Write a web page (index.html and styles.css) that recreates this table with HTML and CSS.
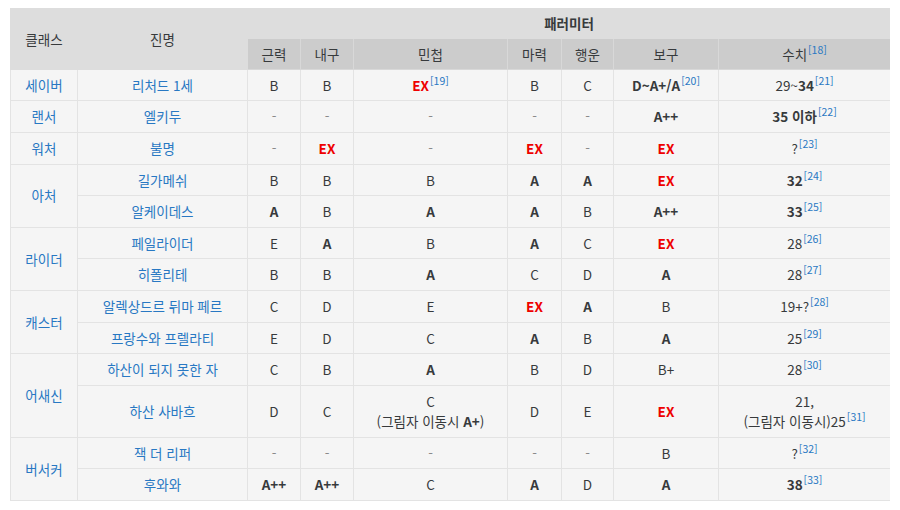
FILE: index.html
```html
<!DOCTYPE html>
<html lang="ko">
<head>
<meta charset="utf-8">
<link rel="stylesheet" href="styles.css">
</head>
<body>
<table class="params">
  <colgroup>
    <col class="c-class"><col class="c-name"><col class="c-str"><col class="c-end"><col class="c-agi"><col class="c-mag"><col class="c-luck"><col class="c-np"><col class="c-val">
  </colgroup>
  <thead>
    <tr class="h1">
      <th rowspan="2">클래스</th>
      <th rowspan="2">진명</th>
      <th colspan="7" class="strong">패러미터</th>
    </tr>
    <tr class="h2">
      <th>근력</th><th>내구</th><th>민첩</th><th>마력</th><th>행운</th><th>보구</th><th>수치<sup>[18]</sup></th>
    </tr>
  </thead>
  <tbody>
    <tr>
      <td class="lk">세이버</td><td class="lk">리처드 1세</td>
      <td>B</td><td>B</td><td><b class="ex">EX</b><sup>[19]</sup></td><td>B</td><td>C</td><td><b>D~A+/A</b><sup>[20]</sup></td><td>29~<b>34</b><sup>[21]</sup></td>
    </tr>
    <tr>
      <td class="lk">랜서</td><td class="lk">엘키두</td>
      <td class="dash">-</td><td class="dash">-</td><td class="dash">-</td><td class="dash">-</td><td class="dash">-</td><td><b>A++</b></td><td><b>35 이하</b><sup>[22]</sup></td>
    </tr>
    <tr>
      <td class="lk">워처</td><td class="lk">불명</td>
      <td class="dash">-</td><td><b class="ex">EX</b></td><td class="dash">-</td><td><b class="ex">EX</b></td><td class="dash">-</td><td><b class="ex">EX</b></td><td>?<sup>[23]</sup></td>
    </tr>
    <tr>
      <td class="lk" rowspan="2">아처</td><td class="lk">길가메쉬</td>
      <td>B</td><td>B</td><td>B</td><td><b>A</b></td><td><b>A</b></td><td><b class="ex">EX</b></td><td><b>32</b><sup>[24]</sup></td>
    </tr>
    <tr>
      <td class="lk">알케이데스</td>
      <td><b>A</b></td><td>B</td><td><b>A</b></td><td><b>A</b></td><td>B</td><td><b>A++</b></td><td><b>33</b><sup>[25]</sup></td>
    </tr>
    <tr>
      <td class="lk" rowspan="2">라이더</td><td class="lk">페일라이더</td>
      <td>E</td><td><b>A</b></td><td>B</td><td><b>A</b></td><td>C</td><td><b class="ex">EX</b></td><td>28<sup>[26]</sup></td>
    </tr>
    <tr>
      <td class="lk">히폴리테</td>
      <td>B</td><td>B</td><td><b>A</b></td><td>C</td><td>D</td><td><b>A</b></td><td>28<sup>[27]</sup></td>
    </tr>
    <tr>
      <td class="lk" rowspan="2">캐스터</td><td class="lk">알렉상드르 뒤마 페르</td>
      <td>C</td><td>D</td><td>E</td><td><b class="ex">EX</b></td><td><b>A</b></td><td>B</td><td>19+?<sup>[28]</sup></td>
    </tr>
    <tr>
      <td class="lk">프랑수와 프렐라티</td>
      <td>E</td><td>D</td><td>C</td><td><b>A</b></td><td>B</td><td><b>A</b></td><td>25<sup>[29]</sup></td>
    </tr>
    <tr>
      <td class="lk" rowspan="2">어새신</td><td class="lk">하산이 되지 못한 자</td>
      <td>C</td><td>B</td><td><b>A</b></td><td>B</td><td>D</td><td>B+</td><td>28<sup>[30]</sup></td>
    </tr>
    <tr>
      <td class="lk">하산 사바흐</td>
      <td>D</td><td>C</td><td>C<br>(그림자 이동시 <b>A+</b>)</td><td>D</td><td>E</td><td><b class="ex">EX</b></td><td>21,<br>(그림자 이동시)25<sup>[31]</sup></td>
    </tr>
    <tr>
      <td class="lk" rowspan="2">버서커</td><td class="lk">잭 더 리퍼</td>
      <td class="dash">-</td><td class="dash">-</td><td class="dash">-</td><td class="dash">-</td><td class="dash">-</td><td>B</td><td>?<sup>[32]</sup></td>
    </tr>
    <tr>
      <td class="lk">후와와</td>
      <td><b>A++</b></td><td><b>A++</b></td><td>C</td><td><b>A</b></td><td>D</td><td><b>A</b></td><td><b>38</b><sup>[33]</sup></td>
    </tr>
  </tbody>
</table>
</body>
</html>
```

FILE: styles.css
```css
html, body {
  background: #ffffff;
}
body {
  margin: 8px 10px;
  font-family: "Noto Sans CJK KR", "Noto Sans", sans-serif;
  font-size: 13.5px;
  color: #373a3c;
}
.params {
  width: 880px;
  table-layout: fixed;
  border-collapse: collapse;
  background: #f5f5f5;
  border: 1px solid #e3e3e3;
}
.c-class { width: 67px; }
.c-name { width: 170px; }
.c-str { width: 53px; }
.c-end { width: 53px; }
.c-agi { width: 154px; }
.c-mag { width: 54px; }
.c-luck { width: 52px; }
.c-np { width: 105px; }
.c-val { width: 172px; }

.params th,
.params td {
  text-align: center;
  vertical-align: middle;
  line-height: 20.6px;
  padding: 5px 4px;
  border: 1px solid #e3e3e3;
  font-weight: normal;
}
.params th {
  padding: 4.4px 4px;
}
.h1 th {
  background: #dddddd;
  border-color: #dddddd;
}
.h1 th.strong {
  font-weight: bold;
}
.h2 th {
  background: #cccccc;
  border-color: #d8d8d8;
}
.lk {
  color: #2878c3;
}
.ex {
  color: #ee0000;
}
.dash {
  color: #8a8a8a;
}
b {
  font-weight: bold;
}
sup {
  color: #2878c3;
  font-size: 10.5px;
  line-height: 0;
  vertical-align: 6px;
  margin-left: 1px;
}
```
